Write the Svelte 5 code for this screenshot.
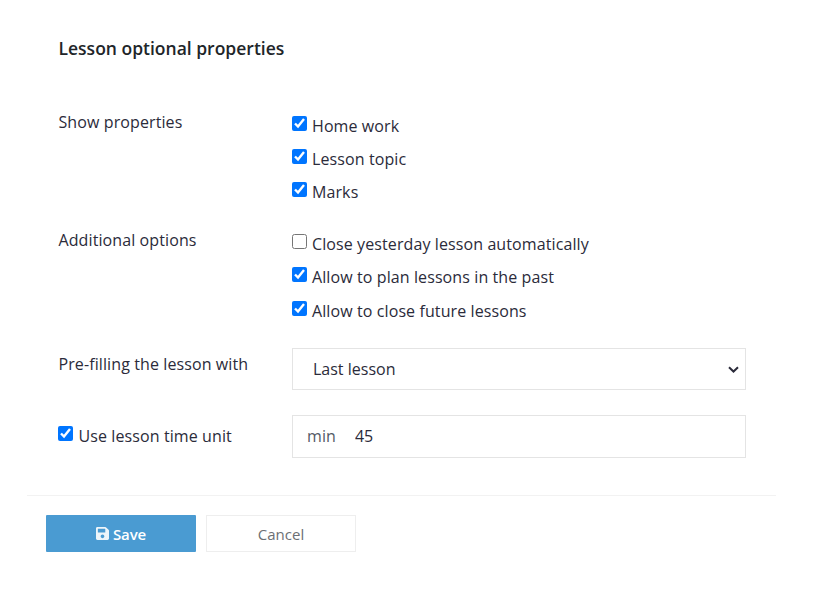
<script lang="ts">
  const showProps = [
    { label: "Home work", checked: true },
    { label: "Lesson topic", checked: true },
    { label: "Marks", checked: true },
  ];
  const extraOptions = [
    { label: "Close yesterday lesson automatically", checked: false },
    { label: "Allow to plan lessons in the past", checked: true },
    { label: "Allow to close future lessons", checked: true },
  ];
</script>

<div class="page">
  <h2>Lesson optional properties</h2>

  <div class="form">
    <div class="label">Show properties</div>
    <div class="checks">
      {#each showProps as p}
        <label class="check"><input type="checkbox" checked={p.checked} /> <span>{p.label}</span></label>
      {/each}
    </div>

    <div class="label">Additional options</div>
    <div class="checks extra">
      {#each extraOptions as p}
        <label class="check"><input type="checkbox" checked={p.checked} /> <span>{p.label}</span></label>
      {/each}
    </div>

    <div class="label third">Pre-filling the lesson with</div>
    <div class="select-wrap">
      <select class="control">
        <option>Last lesson</option>
        <option>Empty</option>
      </select>
      <svg class="chevron" viewBox="0 0 11 7" width="11" height="7" aria-hidden="true">
        <path d="M1 1.2l4.5 4.3L10 1.2" fill="none" stroke="currentColor" stroke-width="2" />
      </svg>
    </div>

    <label class="check unit"><input type="checkbox" checked /> <span>Use lesson time unit</span></label>
    <div class="control group">
      <span class="addon">min</span>
      <input type="text" value="45" />
    </div>
  </div>

  <div class="footer">
    <button class="save">
      <svg viewBox="0 0 448 512" width="13" height="15" aria-hidden="true">
        <path fill="currentColor" d="M433.941 129.941l-83.882-83.882A48 48 0 0 0 316.118 32H48C21.49 32 0 53.49 0 80v352c0 26.51 21.49 48 48 48h352c26.51 0 48-21.49 48-48V163.882a48 48 0 0 0-14.059-33.941zM224 416c-35.346 0-64-28.654-64-64 0-35.346 28.654-64 64-64s64 28.654 64 64c0 35.346-28.654 64-64 64zm96-304.52V212c0 6.627-5.373 12-12 12H76c-6.627 0-12-5.373-12-12V108c0-6.627 5.373-12 12-12h228.52c3.183 0 6.235 1.264 8.485 3.515l3.48 3.48A11.996 11.996 0 0 1 320 111.48z" />
      </svg>
      Save
    </button>
    <button class="cancel">Cancel</button>
  </div>
</div>

<style>
  :global(body) {
    margin: 0;
    background: #fff;
  }
  .page {
    width: 818px;
    height: 604px;
    box-sizing: border-box;
    padding-top: 36px;
    font-family: "Open Sans", sans-serif;
    font-size: 16px;
    letter-spacing: 0.1px;
    color: #2b2b3a;
  }
  h2 {
    margin: 0 0 0 58.5px;
    font-size: 17.5px;
    line-height: 24px;
    font-weight: 600;
    letter-spacing: 0;
    color: #212529;
  }
  .form {
    display: grid;
    grid-template-columns: 233.5px 454px;
    margin: 50px 0 0 58.5px;
  }
  .label {
    line-height: 24px;
  }
  .third {
    margin-top: 6px;
  }
  .checks {
    display: flex;
    flex-direction: column;
    gap: 9.25px;
    padding-top: 3.9px;
    margin-bottom: 23.8px;
  }
  .extra {
    margin-bottom: 23.5px;
  }
  .check {
    display: flex;
    align-items: flex-start;
    gap: 5px;
    line-height: 24px;
  }
  .check input {
    width: 15px;
    height: 15px;
    margin: 2px 0 0;
  }
  .control {
    box-sizing: border-box;
    width: 454px;
    border: 1px solid #e4e4e4;
    background: #fff;
    font: inherit;
    color: inherit;
  }
  .select-wrap {
    position: relative;
    height: 42px;
    margin-top: 2px;
  }
  select.control {
    appearance: none;
    display: block;
    height: 42px;
    padding: 0 30px 0 20px;
    border-radius: 0;
    outline: none;
  }
  .chevron {
    position: absolute;
    right: 7px;
    top: 18px;
    pointer-events: none;
    color: #2b2b3a;
  }
  .unit {
    margin-top: 34px;
    gap: 5.5px;
  }
  .unit input {
    margin-left: -0.5px;
  }
  .group {
    display: flex;
    align-items: center;
    height: 43px;
    margin-top: 25px;
    padding-bottom: 1px;
  }
  .addon {
    padding: 0 19px 0 14px;
    color: #555a66;
  }
  .group input {
    flex: 1;
    min-width: 0;
    border: 0;
    outline: none;
    padding: 0;
    font: inherit;
    color: inherit;
  }
  .footer {
    display: flex;
    gap: 10px;
    margin: 37px 42px 0 27px;
    padding: 19px 0 0 19px;
    border-top: 1px solid #f2f2f2;
  }
  button {
    width: 150px;
    height: 37px;
    box-sizing: border-box;
    font-family: inherit;
    font-size: 15px;
    cursor: pointer;
  }
  .save {
    display: flex;
    align-items: center;
    justify-content: center;
    gap: 4px;
    border: 0;
    border-radius: 1px;
    background: #4a9bd2;
    color: #fff;
    font-weight: 600;
    letter-spacing: -0.1px;
  }
  .save svg {
    opacity: 0.9;
  }
  .cancel {
    border: 1px solid #eeeeee;
    background: #fff;
    color: #6c6f75;
  }
</style>
